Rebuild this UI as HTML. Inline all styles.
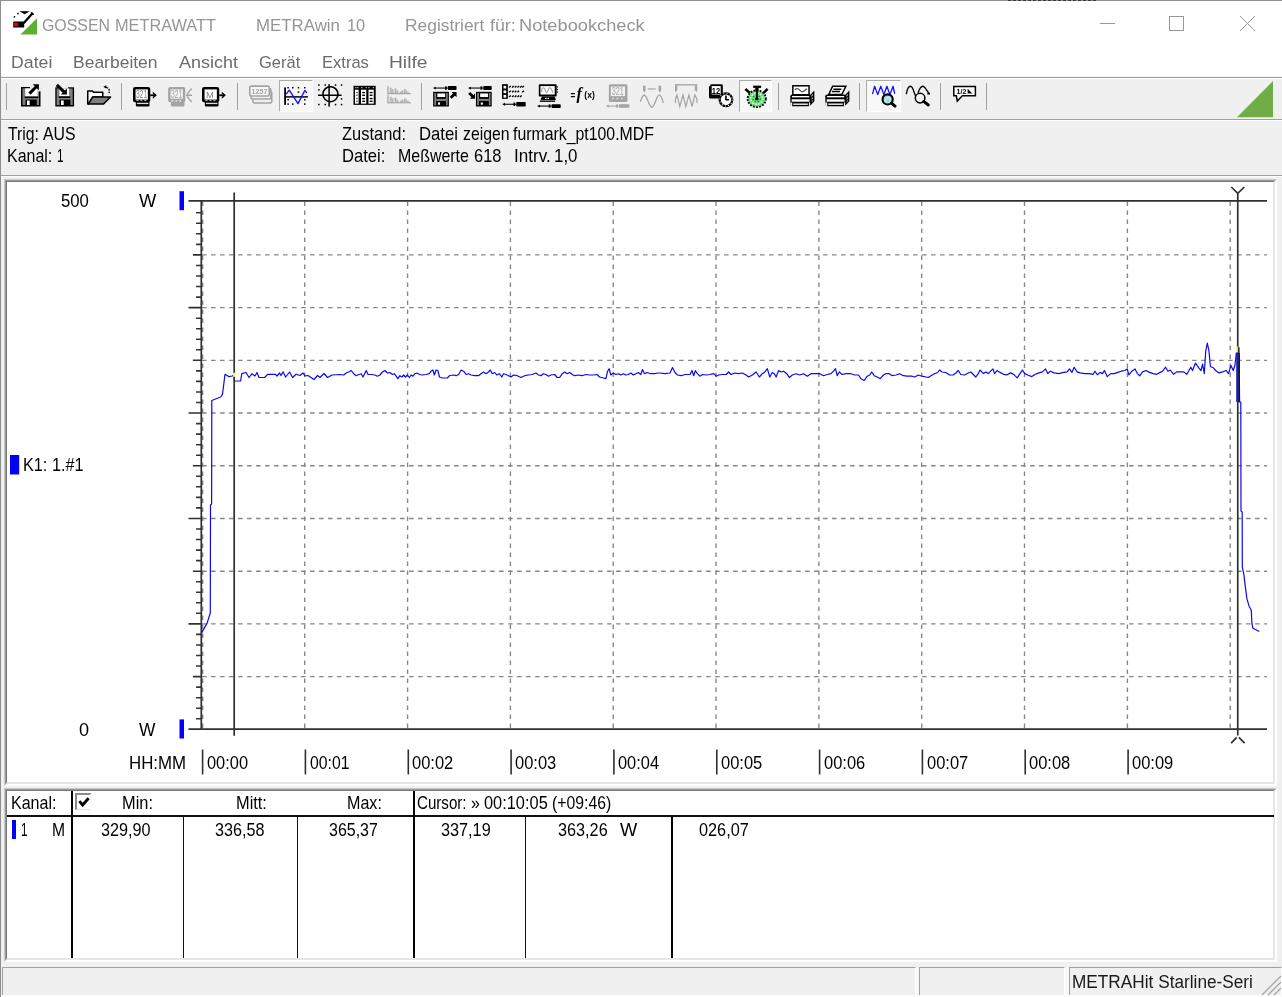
<!DOCTYPE html><html lang="de"><head><meta charset="utf-8"><title>METRAwin 10</title><style>
html,body{margin:0;padding:0;background:#fff;}
body{width:1282px;height:997px;overflow:hidden;position:relative;font-family:"Liberation Sans",sans-serif;}
.a{position:absolute;}
.t{position:absolute;white-space:pre;line-height:30px;height:30px;transform-origin:0 0;}
.sep{position:absolute;top:83px;width:1px;height:27px;background:#a0a0a0;}
.ic{position:absolute;overflow:visible;}
.tb .ic{filter:blur(0.3px);}
.pressed{position:absolute;top:80px;height:32px;background:#f8f8f8;border-top:1px solid #acacac;border-left:1px solid #acacac;border-right:1px solid #fff;border-bottom:1px solid #fff;box-sizing:border-box;}
</style></head><body>
<div class="a" style="left:0;top:0;width:1282px;height:78px;background:#fff"></div>
<div class="a" style="left:0;top:78px;width:1282px;height:919px;background:#f0f0f0"></div>
<div class="a" style="left:0;top:0;width:1282px;height:1px;background:#8e8e8e"></div>
<div class="a" style="left:0;top:0;width:1px;height:997px;background:#8e8e8e"></div>
<div class="a" style="left:1008px;top:0;width:88px;height:0;border-top:1px dashed #3a3a3a"></div>
<div class="a" style="left:1px;top:76px;width:1281px;height:1px;background:#f4f4f4"></div>
<div class="a" style="left:1px;top:77px;width:1281px;height:1px;background:#a0a0a0"></div>
<div class="a" style="left:1px;top:78px;width:1281px;height:1px;background:#fff"></div>
<div class="a" style="left:1px;top:119px;width:1281px;height:1px;background:#a0a0a0"></div>
<div class="a" style="left:1px;top:120px;width:1281px;height:1px;background:#fff"></div>
<div class="a" style="left:1px;top:175px;width:1281px;height:1px;background:#a0a0a0"></div>
<div class="a" style="left:1px;top:176px;width:1281px;height:1px;background:#fff"></div>
<svg class="ic" style="left:12px;top:10px" width="27" height="27" viewBox="12 10 27 27">
<polygon points="20.5,34.6 37,34.6 37,18.2" fill="#5ab031"/>
<path d="M13.2,21.6 h11 v6 h-11z" fill="#000"/>
<rect x="13.7" y="22.7" width="4.4" height="3.6" fill="#e00000"/>
<path d="M23.6,23.2 L32.5,13.2" stroke="#000" stroke-width="2.2" fill="none"/>
<path d="M31.2,12.4 l2.4,2.4" stroke="#000" stroke-width="1.6" fill="none"/>
<path d="M13.8,17.6 l1.2,-1.4 M17.2,14 l1.4,-0.9 M21.8,11.8 h5.6 l-2.8,1.6z" stroke="#000" stroke-width="1.3" fill="#000"/>
</svg>
<svg class="ic" style="left:1090px;top:8px" width="180" height="32" viewBox="1090 8 180 32" fill="none" stroke="#999" stroke-width="1">
<path d="M1100,23.5 h15"/>
<rect x="1169.5" y="16.5" width="14" height="14"/>
<path d="M1240,16 l15,15 M1255,16 l-15,15"/>
</svg>
<div class="sep" style="left:6px"></div>
<div class="sep" style="left:121px"></div>
<div class="sep" style="left:237px"></div>
<div class="sep" style="left:421px"></div>
<div class="sep" style="left:778px"></div>
<div class="sep" style="left:859px"></div>
<div class="sep" style="left:940px"></div>
<div class="sep" style="left:986px"></div>
<div class="pressed" style="left:279px;width:34px"></div>
<div class="pressed" style="left:739px;width:33px"></div>
<div class="pressed" style="left:866px;width:35px"></div>
<svg class="ic" style="left:1236px;top:80px" width="38" height="38" viewBox="1236 80 38 38"><polygon points="1237,117.2 1273,117.2 1273,81" fill="#70ad47"/></svg>
<div class="tb"><svg class="ic" style="left:17.6px;top:84.4px" width="24" height="24" viewBox="0 0 16 16"><rect x="2" y="2" width="13" height="13" fill="#000"/><rect x="3" y="2.9" width="11" height="11.1" fill="#808080"/><rect x="4.8" y="2.9" width="8.3" height="5.5" fill="#fff"/><rect x="4.4" y="8.3" width="9.2" height="1.1" fill="#000"/><rect x="5" y="10.4" width="7.5" height="3.6" fill="#000"/><rect x="6" y="11" width="1.8" height="3" fill="#fff"/><rect x="8" y="1.5" width="7.2" height="1.6" fill="#f0f0f0"/><rect x="13.1" y="1.5" width="2.2" height="3.4" fill="#f0f0f0"/><path d="M7.6,6.4 L12.2,1.8" stroke="#000" stroke-width="2" fill="none"/><polygon points="9.8,0.1 13.9,0.1 13.9,4.2" fill="#000"/></svg>
<svg class="ic" style="left:52.1px;top:84.4px" width="24" height="24" viewBox="0 0 16 16"><rect x="2.2" y="2.2" width="12.5" height="12.8" fill="#000"/><rect x="3.1" y="3" width="10.7" height="11" fill="#808080"/><rect x="5" y="3" width="6.4" height="5.2" fill="#fff"/><rect x="4.4" y="8.2" width="7.8" height="1.1" fill="#000"/><rect x="5" y="10.4" width="7.3" height="3.6" fill="#000"/><rect x="6" y="11" width="1.8" height="3" fill="#fff"/><rect x="4.2" y="1.6" width="6.4" height="1.5" fill="#f0f0f0"/><path d="M3.2,0.6 L8.2,5.4" stroke="#000" stroke-width="2" fill="none"/><polygon points="9.9,7 5.9,7 9.9,3" fill="#000"/></svg>
<svg class="ic" style="left:86.6px;top:84.4px" width="24" height="24" viewBox="0 0 16 16"><polygon points="0.5,4.6 3.6,4.6 4.4,5.5 10.5,5.5 10.5,8.6 3.8,8.6 0.9,13.4 0.5,13.4" fill="#fff" stroke="#000" stroke-width="1" stroke-linejoin="round"/><polygon points="3.9,8.6 15.7,8.6 11,13.4 0.9,13.4" fill="#808080" stroke="#000" stroke-width="1" stroke-linejoin="round"/><path d="M12.6,2.2 Q15.6,2.8 14.7,6" stroke="#000" stroke-width="0.9" fill="none" stroke-dasharray="1.4 0.7"/><polygon points="10.9,1.9 13,0.9 12.7,3" fill="#000"/></svg>
<svg class="ic" style="left:133.1px;top:84.4px" width="24" height="24" viewBox="0 0 16 16"><rect x="0" y="2" width="11.5" height="10.2" rx="1.4" fill="#000"/><rect x="1.7" y="3.6" width="8.2" height="6.8" fill="#fff"/><text x="2.0" y="9.2" font-size="7.4" fill="#808080" font-family="Liberation Sans, sans-serif" textLength="7.4" lengthAdjust="spacingAndGlyphs">321</text><rect x="2.3" y="10.8" width="1.4" height="0.6" fill="#ddd"/><rect x="4.9" y="10.8" width="1.4" height="0.6" fill="#ddd"/><rect x="7.5" y="10.8" width="1.4" height="0.6" fill="#ddd"/><rect x="1.9" y="11.6" width="9.1" height="3.4" rx="0.8" fill="#000"/><rect x="2.6" y="12.5" width="7.7" height="0.9" fill="#dcdcdc"/><path d="M11.5,7.5 H15" stroke="#000" stroke-width="1.2" fill="none"/><polygon points="13.2,5.1 15.9,7.5 13.2,9.9 13.2,8.6 14.3,7.5 13.2,6.4" fill="#000"/></svg>
<svg class="ic" style="left:167.6px;top:84.4px" width="24" height="24" viewBox="0 0 16 16"><rect x="0.1" y="2" width="11.4" height="10.2" rx="1.4" fill="#a4a4a4"/><rect x="1.9" y="11.6" width="9.1" height="3.4" rx="0.8" fill="#a4a4a4"/><rect x="1.7" y="3.6" width="8.2" height="6.2" fill="#f2f2f2"/><text x="2.0" y="9.2" font-size="7.4" fill="#a4a4a4" font-family="Liberation Sans, sans-serif" textLength="7.4" lengthAdjust="spacingAndGlyphs">321</text><rect x="2.3" y="10.8" width="1.2" height="0.9" fill="#f2f2f2"/><rect x="4.9" y="10.8" width="1.2" height="0.9" fill="#f2f2f2"/><rect x="7.5" y="10.8" width="1.2" height="0.9" fill="#f2f2f2"/><path d="M15.8,3 L12.8,6.6 M12,7.5 H16 M12.8,8.4 L15.8,12" stroke="#a4a4a4" stroke-width="0.9" fill="none"/><polygon points="12,7.5 13.6,6.4 13.6,8.6" fill="#a4a4a4"/></svg>
<svg class="ic" style="left:202.1px;top:84.4px" width="24" height="24" viewBox="0 0 16 16"><rect x="0" y="2" width="11.5" height="10.2" rx="1.4" fill="#000"/><rect x="1.7" y="3.6" width="8.2" height="6.8" fill="#fff"/><text x="2.7" y="9.2" font-size="6.4" fill="#808080" font-family="Liberation Sans, sans-serif" textLength="5.2" lengthAdjust="spacingAndGlyphs">M</text><rect x="2.3" y="10.8" width="1.4" height="0.6" fill="#ddd"/><rect x="4.9" y="10.8" width="1.4" height="0.6" fill="#ddd"/><rect x="7.5" y="10.8" width="1.4" height="0.6" fill="#ddd"/><rect x="1.9" y="11.6" width="9.1" height="3.4" rx="0.8" fill="#000"/><rect x="2.6" y="12.5" width="7.7" height="0.9" fill="#dcdcdc"/><path d="M11.5,7.5 H15" stroke="#000" stroke-width="1.2" fill="none"/><polygon points="13.2,5.1 15.9,7.5 13.2,9.9 13.2,8.6 14.3,7.5 13.2,6.4" fill="#000"/></svg>
<svg class="ic" style="left:248.6px;top:84.4px" width="24" height="24" viewBox="0 0 16 16"><rect x="2.6" y="5" width="12.6" height="7.6" rx="1" fill="#f0f0f0" stroke="#a4a4a4" stroke-width="1"/><rect x="1.4" y="3" width="13.2" height="7" rx="1" fill="#f0f0f0" stroke="#a4a4a4" stroke-width="1"/><rect x="0.5" y="1.4" width="13" height="6.6" rx="1" fill="#f6f6f6" stroke="#a4a4a4" stroke-width="1.1"/><text x="1.7" y="6.7" font-size="5" fill="#a4a4a4" font-family="Liberation Sans, sans-serif" font-weight="bold" textLength="10.6" lengthAdjust="spacingAndGlyphs">1257</text></svg>
<svg class="ic" style="left:283.1px;top:84.4px" width="24" height="24" viewBox="0 0 16 16"><rect x="0.8" y="2.3" width="1.2" height="11.6" fill="#000"/><rect x="0.8" y="8.1" width="15.8" height="1.0" fill="#000"/><rect x="2.9" y="2.0" width="1" height="1" fill="#000"/><rect x="6.0" y="2.0" width="1" height="1" fill="#000"/><rect x="9.8" y="2.0" width="1" height="1" fill="#000"/><rect x="14.0" y="2.0" width="1" height="1" fill="#000"/><rect x="9.8" y="4.9" width="1" height="1" fill="#000"/><rect x="2.9" y="10.0" width="1" height="1" fill="#000"/><rect x="14.0" y="10.0" width="1" height="1" fill="#000"/><rect x="2.9" y="12.9" width="1" height="1" fill="#000"/><rect x="6.0" y="12.9" width="1" height="1" fill="#000"/><rect x="14.0" y="12.9" width="1" height="1" fill="#000"/><path d="M2.1,6.7 L4.2,4.1 L10,13.1 L14.5,4.3 L15.9,5.9" stroke="#1010ff" stroke-width="0.9" fill="none" stroke-linejoin="round"/></svg>
<svg class="ic" style="left:317.6px;top:84.4px" width="24" height="24" viewBox="0 0 16 16"><rect x="0.09999999999999998" y="0.2" width="1" height="1" fill="#000"/><rect x="4.3" y="0.2" width="1" height="1" fill="#000"/><rect x="11.200000000000001" y="0.2" width="1" height="1" fill="#000"/><rect x="15.200000000000001" y="0.2" width="1" height="1" fill="#000"/><rect x="0.09999999999999998" y="3.4" width="1" height="1" fill="#000"/><rect x="15.200000000000001" y="9.5" width="1" height="1" fill="#000"/><rect x="0.09999999999999998" y="13.200000000000001" width="1" height="1" fill="#000"/><rect x="4.3" y="13.200000000000001" width="1" height="1" fill="#000"/><rect x="11.200000000000001" y="13.200000000000001" width="1" height="1" fill="#000"/><rect x="15.200000000000001" y="13.200000000000001" width="1" height="1" fill="#000"/><rect x="6.9" y="0.1" width="1" height="15" fill="#000"/><rect x="0" y="7" width="15.7" height="1" fill="#000"/><circle cx="8.3" cy="6.8" r="5" fill="none" stroke="#000" stroke-width="1.1"/></svg>
<svg class="ic" style="left:352.1px;top:84.4px" width="24" height="24" viewBox="0 0 16 16"><rect x="1" y="1.2" width="14.8" height="12.7" fill="#000"/><rect x="2.25" y="2.1" width="0.7" height="0.7" fill="#fff"/><rect x="3.55" y="2.1" width="0.7" height="0.7" fill="#fff"/><rect x="6.25" y="2.1" width="0.7" height="0.7" fill="#fff"/><rect x="9.15" y="2.1" width="0.7" height="0.7" fill="#fff"/><rect x="10.950000000000001" y="2.1" width="0.7" height="0.7" fill="#fff"/><rect x="13.85" y="2.1" width="0.7" height="0.7" fill="#fff"/><rect x="2" y="3.8" width="2.4" height="9.3" fill="#fff"/><rect x="6" y="3.8" width="3.5" height="9.3" fill="#fff"/><rect x="11" y="3.8" width="3.5" height="9.3" fill="#fff"/><rect x="2.9" y="5.3" width="0.8" height="0.8" fill="#000"/><rect x="6.8" y="5.25" width="1.9" height="0.9" fill="#000"/><rect x="11.8" y="5.25" width="1.9" height="0.9" fill="#000"/><rect x="2.9" y="7.1" width="0.8" height="0.8" fill="#000"/><rect x="6.8" y="7.05" width="1.9" height="0.9" fill="#000"/><rect x="11.8" y="7.05" width="1.9" height="0.9" fill="#000"/><rect x="2.9" y="9.299999999999999" width="0.8" height="0.8" fill="#000"/><rect x="6.8" y="9.25" width="1.9" height="0.9" fill="#000"/><rect x="11.8" y="9.25" width="1.9" height="0.9" fill="#000"/><rect x="2.9" y="11.1" width="0.8" height="0.8" fill="#000"/><rect x="6.8" y="11.05" width="1.9" height="0.9" fill="#000"/><rect x="11.8" y="11.05" width="1.9" height="0.9" fill="#000"/></svg>
<svg class="ic" style="left:386.6px;top:84.4px" width="24" height="24" viewBox="0 0 16 16"><rect x="0.2" y="1.2000000000000002" width="0.8" height="4.8" fill="#a4a4a4"/><rect x="0" y="6" width="15.9" height="0.8" fill="#a4a4a4"/><rect x="1.8" y="2.4" width="1.2" height="3.6" fill="#b4b4b4"/><rect x="3" y="3.4" width="1.3" height="2.6" fill="#b4b4b4"/><rect x="5" y="3" width="1.3" height="3" fill="#b4b4b4"/><rect x="6.3" y="4.3" width="1.2" height="1.7" fill="#b4b4b4"/><rect x="8.6" y="5" width="1.2" height="1" fill="#b4b4b4"/><rect x="9.8" y="4.1" width="1.2" height="1.9" fill="#b4b4b4"/><rect x="11.4" y="3.3" width="1.1" height="2.7" fill="#b4b4b4"/><rect x="12.5" y="4.4" width="1" height="1.6" fill="#b4b4b4"/><rect x="13.5" y="5.2" width="1" height="0.8" fill="#b4b4b4"/><rect x="0.2" y="7.3" width="0.8" height="4.8" fill="#a4a4a4"/><rect x="0" y="12.1" width="15.9" height="0.8" fill="#a4a4a4"/><rect x="1.8" y="8.5" width="1.2" height="3.6" fill="#b4b4b4"/><rect x="3" y="9.5" width="1.3" height="2.6" fill="#b4b4b4"/><rect x="5" y="9.1" width="1.3" height="3" fill="#b4b4b4"/><rect x="6.3" y="10.4" width="1.2" height="1.7" fill="#b4b4b4"/><rect x="8.6" y="11.1" width="1.2" height="1" fill="#b4b4b4"/><rect x="9.8" y="10.2" width="1.2" height="1.9" fill="#b4b4b4"/><rect x="11.4" y="9.399999999999999" width="1.1" height="2.7" fill="#b4b4b4"/><rect x="12.5" y="10.5" width="1" height="1.6" fill="#b4b4b4"/><rect x="13.5" y="11.299999999999999" width="1" height="0.8" fill="#b4b4b4"/></svg>
<svg class="ic" style="left:433.1px;top:84.4px" width="24" height="24" viewBox="0 0 16 16"><rect x="0.8" y="2.35" width="9.1" height="0.7" fill="#000"/><polygon points="0,2.7 1.8,1.7500000000000002 1.8,3.6500000000000004" fill="#000"/><rect x="8.0" y="1.6" width="1.2" height="2.2" fill="#000"/><rect x="9.9" y="1.4000000000000001" width="5.799999999999999" height="2.6" rx="0.5" fill="#000"/><rect x="0.1" y="5.2" width="10.5" height="9.8" fill="#000"/><rect x="0.9" y="6" width="1.2" height="8.2" fill="#808080"/><rect x="8.7" y="6" width="1.1" height="8.2" fill="#808080"/><rect x="2.9" y="6.3" width="5.2" height="2.4" fill="#fff"/><rect x="2.1" y="9.9" width="6.6" height="1.4" fill="#808080"/><rect x="3.3000000000000003" y="12.3" width="1.4" height="1.5" fill="#fff"/><path d="M11.8,9.2 L14.4,6.6" stroke="#000" stroke-width="1.9" fill="none"/><polygon points="12.3,5.4 15.7,5.4 15.7,8.8" fill="#000"/></svg>
<svg class="ic" style="left:467.6px;top:84.4px" width="24" height="24" viewBox="0 0 16 16"><rect x="0.9" y="2.35" width="9.299999999999999" height="0.7" fill="#000"/><polygon points="0.1,2.7 1.9000000000000001,1.7500000000000002 1.9000000000000001,3.6500000000000004" fill="#000"/><rect x="8.299999999999999" y="1.6" width="1.2" height="2.2" fill="#000"/><rect x="10.2" y="1.4000000000000001" width="5.600000000000001" height="2.6" rx="0.5" fill="#000"/><rect x="5.3" y="5.2" width="10.5" height="9.8" fill="#000"/><rect x="6.1" y="6" width="1.2" height="8.2" fill="#808080"/><rect x="13.899999999999999" y="6" width="1.1" height="8.2" fill="#808080"/><rect x="8.1" y="6.3" width="5.2" height="2.4" fill="#fff"/><rect x="7.3" y="9.9" width="6.6" height="1.4" fill="#808080"/><rect x="8.5" y="12.3" width="1.4" height="1.5" fill="#fff"/><path d="M0.8,6 L3.5,8.6" stroke="#000" stroke-width="1.9" fill="none"/><polygon points="4.7,9.8 1.2,9.8 4.7,6.4" fill="#000"/></svg>
<svg class="ic" style="left:502.1px;top:84.4px" width="24" height="24" viewBox="0 0 16 16"><rect x="0" y="0.1" width="3.9" height="9.8" fill="#000"/><rect x="1" y="1.2" width="1.8" height="1.8" fill="#fff"/><rect x="1" y="4.3" width="1.8" height="1.8" fill="#fff"/><rect x="1" y="7.3" width="1.8" height="1.8" fill="#fff"/><path d="M4.7,2.4 L5.8,1.4" stroke="#000" stroke-width="0.9" fill="none"/><path d="M6.7,2.4 L7.8,1.4" stroke="#000" stroke-width="0.9" fill="none"/><path d="M8.5,2.4 L9.6,1.4" stroke="#000" stroke-width="0.9" fill="none"/><path d="M10.3,2.4 L11.4,1.4" stroke="#000" stroke-width="0.9" fill="none"/><path d="M12.0,2.4 L13.1,1.4" stroke="#000" stroke-width="0.9" fill="none"/><path d="M13.5,2.4 L14.6,1.4" stroke="#000" stroke-width="0.9" fill="none"/><path d="M4.7,5.5 L5.8,4.5" stroke="#000" stroke-width="0.9" fill="none"/><path d="M6.7,5.5 L7.8,4.5" stroke="#000" stroke-width="0.9" fill="none"/><path d="M8.5,5.5 L9.6,4.5" stroke="#000" stroke-width="0.9" fill="none"/><path d="M10.3,5.5 L11.4,4.5" stroke="#000" stroke-width="0.9" fill="none"/><path d="M13.5,5.5 L14.6,4.5" stroke="#000" stroke-width="0.9" fill="none"/><path d="M4.7,8.6 L5.8,7.6" stroke="#000" stroke-width="0.9" fill="none"/><path d="M6.7,8.6 L7.8,7.6" stroke="#000" stroke-width="0.9" fill="none"/><path d="M8.5,8.6 L9.6,7.6" stroke="#000" stroke-width="0.9" fill="none"/><path d="M10.3,8.6 L11.4,7.6" stroke="#000" stroke-width="0.9" fill="none"/><path d="M12.0,8.6 L13.1,7.6" stroke="#000" stroke-width="0.9" fill="none"/><rect x="1.0" y="13.15" width="8.5" height="0.7" fill="#000"/><polygon points="0.2,13.5 2.0,12.55 2.0,14.45" fill="#000"/><rect x="7.6" y="12.4" width="1.2" height="2.2" fill="#000"/><rect x="9.5" y="12.05" width="6.300000000000001" height="2.9" rx="0.5" fill="#000"/></svg>
<svg class="ic" style="left:536.6px;top:84.4px" width="24" height="24" viewBox="0 0 16 16"><rect x="1.2" y="0.1" width="11.9" height="8.2" rx="0.6" fill="#000"/><rect x="2.3" y="1.4" width="9.5" height="5.6" fill="#fff"/><path d="M3.2,5.6 V3.4 Q4.1,1.8 5,3.2 L5.9,5.2 Q6.6,6.2 7.2,4.6 L7.9,2.9 Q8.8,1.8 9.6,3.4 L10.7,5.8" stroke="#a4a4a4" stroke-width="0.7" fill="none"/><rect x="13.1" y="1.5" width="0.8" height="0.9" fill="#000"/><rect x="13.1" y="3.2" width="0.8" height="0.9" fill="#000"/><rect x="13.1" y="4.9" width="0.8" height="0.9" fill="#000"/><polygon points="3.2,8.3 11.8,8.3 12.6,10.7 2.4,10.7" fill="#000"/><rect x="5.4" y="9.2" width="1" height="0.9" fill="#fff"/><rect x="7" y="9.2" width="1" height="0.9" fill="#fff"/><rect x="1.9" y="11" width="10.2" height="0.9" fill="#000"/><rect x="0.9" y="14.35" width="8.799999999999999" height="0.7" fill="#000"/><polygon points="0.1,14.7 1.9000000000000001,13.75 1.9000000000000001,15.649999999999999" fill="#000"/><rect x="7.799999999999999" y="13.6" width="1.2" height="2.2" fill="#000"/><rect x="9.7" y="13.45" width="6.100000000000001" height="2.5" rx="0.5" fill="#000"/></svg>
<svg class="ic" style="left:571.1px;top:84.4px" width="24" height="24" viewBox="0 0 16 16"><text x="-0.4" y="10" font-size="7.2" fill="#000" font-family="Liberation Sans, sans-serif" font-weight="bold" textLength="3.2" lengthAdjust="spacingAndGlyphs">=</text><text x="3.7" y="10.2" font-size="10.8" font-family="Liberation Serif, serif" font-style="italic" font-weight="bold" fill="#000">f</text><text x="8.9" y="9.3" font-size="6.6" fill="#000" font-family="Liberation Sans, sans-serif" font-weight="bold" textLength="7" lengthAdjust="spacingAndGlyphs">(x)</text></svg>
<svg class="ic" style="left:605.6px;top:84.4px" width="24" height="24" viewBox="0 0 16 16"><rect x="1.9" y="0.1" width="12.4" height="11.9" rx="1.2" fill="#a4a4a4"/><rect x="3.2" y="1.7" width="9.5" height="6.4" fill="#f2f2f2"/><text x="3.9" y="7.5" font-size="7.4" fill="#a4a4a4" font-family="Liberation Sans, sans-serif" textLength="8" lengthAdjust="spacingAndGlyphs">321</text><rect x="4.1" y="9.2" width="1" height="0.9" fill="#f2f2f2"/><rect x="7.1" y="9.2" width="1" height="0.9" fill="#f2f2f2"/><rect x="10.1" y="9.2" width="1" height="0.9" fill="#f2f2f2"/><rect x="0.8" y="14.35" width="7.7" height="0.7" fill="#a4a4a4"/><polygon points="0,14.7 1.8,13.75 1.8,15.649999999999999" fill="#a4a4a4"/><rect x="6.6" y="13.6" width="1.2" height="2.2" fill="#a4a4a4"/><rect x="8.5" y="13.549999999999999" width="7.1" height="2.3" rx="0.5" fill="#a4a4a4"/></svg>
<svg class="ic" style="left:640.1px;top:84.4px" width="24" height="24" viewBox="0 0 16 16"><polygon points="2,1.2 3.7,1.2 3.7,4.2 2.85,5.8 2,4.2" fill="#a4a4a4"/><polygon points="12.4,1.2 14.1,1.2 14.1,4.2 13.25,5.8 12.4,4.2" fill="#a4a4a4"/><rect x="5.2" y="2.9" width="5.3" height="0.8" fill="#a4a4a4"/><path d="M0.2,11.8 C1.2,9 1.8,7.3 2.8,7.3 C4.5,7.3 6,15.5 7.9,15.5 C9.8,15.5 11.2,7.3 12.9,7.3 C13.9,7.3 14.8,10 15.6,12.6" stroke="#a4a4a4" stroke-width="0.9" fill="none"/></svg>
<svg class="ic" style="left:674.6px;top:84.4px" width="24" height="24" viewBox="0 0 16 16"><rect x="0" y="0.1" width="14.8" height="0.9" fill="#a4a4a4"/><polygon points="0,0.9 1.6,0.9 1.6,4.2 0,5.5" fill="#a4a4a4"/><polygon points="14.8,0.9 13.2,0.9 13.2,4.2 14.8,5.5" fill="#a4a4a4"/><path d="M0.3,12.6 V10 L1.3,7.3 L3.2,15 L5.3,7.3 L7.2,15 L9.3,7.3 L11.4,15 L13.2,7.3 L14.6,10 V12.6" stroke="#a4a4a4" stroke-width="0.8" fill="none"/></svg>
<svg class="ic" style="left:709.1px;top:84.4px" width="24" height="24" viewBox="0 0 16 16"><rect x="0" y="1.4" width="8.2" height="8.2" rx="0.7" fill="#000"/><rect x="0.9" y="0.1" width="8.3" height="8.3" rx="0.8" fill="#000"/><rect x="1.8" y="1.4" width="6" height="5.6" fill="#fff"/><text x="1.9" y="6.5" font-size="5.6" fill="#000" font-family="Liberation Sans, sans-serif" font-weight="bold" textLength="5.6" lengthAdjust="spacingAndGlyphs">12</text><circle cx="11.3" cy="10.5" r="4.2" fill="#fff" stroke="#000" stroke-width="1.5"/><circle cx="11.3" cy="10.5" r="4.2" fill="none" stroke="#fff" stroke-width="0.9" stroke-dasharray="0.5 1.7"/><path d="M11.3,10.7 V7.6 M11,10.5 H13.4" stroke="#000" stroke-width="1.1" fill="none"/></svg>
<svg class="ic" style="left:743.6px;top:84.4px" width="24" height="24" viewBox="0 0 16 16"><ellipse cx="8.5" cy="9.8" rx="6.1" ry="5.6" fill="#6ddc7a" stroke="#000" stroke-width="1.2" stroke-dasharray="1.2 0.9"/><ellipse cx="8.5" cy="9.8" rx="4" ry="3.7" fill="none" stroke="#fff" stroke-width="1" stroke-dasharray="0.9 1.1"/><ellipse cx="8.5" cy="9.8" rx="2.4" ry="2.2" fill="none" stroke="#0a8a1a" stroke-width="0.9" stroke-dasharray="0.8 1.2"/><rect x="6.1" y="1.1" width="5.3" height="1.5" fill="#000"/><rect x="7.5" y="2.4" width="2.2" height="2.6" fill="#000"/><path d="M0.9,3.3 L3.8,5.9 M15.7,3.3 L13.1,5.9" stroke="#000" stroke-width="1.7" fill="none"/><rect x="7.9" y="4.7" width="1.4" height="5.6" fill="#000"/><rect x="7.5" y="9.3" width="2.2" height="1.5" fill="#000"/></svg>
<svg class="ic" style="left:790.1px;top:84.4px" width="24" height="24" viewBox="0 0 16 16"><rect x="1.9" y="1.2" width="10.8" height="6" fill="#fff" stroke="#000" stroke-width="1"/><path d="M3.3,3.9 Q4.4,2.6 5.6,3.4 L8,5.3 Q9,5.3 11.2,3.2" stroke="#555" stroke-width="0.8" fill="none"/><rect x="0.2" y="7" width="13.7" height="7.9" rx="1.2" fill="#000"/><rect x="1.3" y="8" width="11.5" height="0.9" fill="#fff"/><rect x="1.1" y="10.2" width="11.9" height="1.6" fill="#fff"/><rect x="2.2" y="13" width="9.7" height="0.9" fill="#fff"/><rect x="0.2" y="12.3" width="1.3" height="2.6" fill="#f0f0f0"/><rect x="12.6" y="12.3" width="1.3" height="2.6" fill="#f0f0f0"/><polygon points="13.9,7.4 15.8,5.4 15.8,11.4 13.9,13.4" fill="#b8b8b8" stroke="#000" stroke-width="0.9"/><path d="M13.9,9.6 L15.8,7.6 M13.9,11.6 L15.8,9.6" stroke="#000" stroke-width="0.7" fill="none"/></svg>
<svg class="ic" style="left:824.6px;top:84.4px" width="24" height="24" viewBox="0 0 16 16"><polygon points="5.1,1.5 13.9,1.5 11.2,7 2.5,7" fill="#fff" stroke="#000" stroke-width="1"/><path d="M5.6,3.5 H10.9 M4.7,5 H10" stroke="#000" stroke-width="0.9" fill="none"/><rect x="0.2" y="7" width="13.7" height="7.9" rx="1.2" fill="#000"/><rect x="1.3" y="8" width="11.5" height="0.9" fill="#fff"/><rect x="1.1" y="10.2" width="11.9" height="1.6" fill="#fff"/><rect x="2.2" y="13" width="9.7" height="0.9" fill="#fff"/><rect x="0.2" y="12.3" width="1.3" height="2.6" fill="#f0f0f0"/><rect x="12.6" y="12.3" width="1.3" height="2.6" fill="#f0f0f0"/><polygon points="13.9,7.4 15.8,5.4 15.8,11.4 13.9,13.4" fill="#b8b8b8" stroke="#000" stroke-width="0.9"/><path d="M13.9,9.6 L15.8,7.6 M13.9,11.6 L15.8,9.6" stroke="#000" stroke-width="0.7" fill="none"/></svg>
<svg class="ic" style="left:871.1px;top:84.4px" width="24" height="24" viewBox="0 0 16 16"><defs><radialGradient id="mg" cx="0.55" cy="0.6" r="0.6"><stop offset="0" stop-color="#40f0e0"/><stop offset="0.45" stop-color="#c8e8e8"/><stop offset="1" stop-color="#b0b0b0"/></radialGradient></defs><path d="M1,6.7 L2.4,1.5 L4.5,7.1 L6.5,1.5 L8.6,7.1 L10.6,1.5 L12.6,7.1 L14.7,1.5 L15.8,6.5" stroke="#1010ff" stroke-width="0.85" fill="none" stroke-linejoin="round"/><circle cx="11.1" cy="10.3" r="3.4" fill="url(#mg)" stroke="#000" stroke-width="1.4"/><path d="M13.7,12.8 L16,14.7" stroke="#000" stroke-width="2.0" fill="none" stroke-linecap="round"/></svg>
<svg class="ic" style="left:905.6px;top:84.4px" width="24" height="24" viewBox="0 0 16 16"><path d="M0.2,6.8 C0.8,3 1.8,1.5 3,1.5 C4.8,1.5 5.2,6 6.4,8 M8,5.8 C9.2,2.5 10,1.5 11.2,1.5 C12.6,1.5 13.8,4.5 15.5,6.5 M14.2,6.5 H16" stroke="#000" stroke-width="0.9" fill="none"/><circle cx="9.4" cy="9.4" r="3.2" fill="#f4f4f4" fill-opacity="0.8" stroke="#000" stroke-width="1"/><path d="M11.8,11.6 L14.9,14" stroke="#000" stroke-width="1.9" fill="none" stroke-linecap="round"/></svg>
<svg class="ic" style="left:952.1px;top:84.4px" width="24" height="24" viewBox="0 0 16 16"><polygon points="1.2,1.6 15.6,1.6 15.6,7.9 6.9,7.9 3.5,11.4 2.9,7.9 1.2,7.9" fill="#fff" stroke="#000" stroke-width="1"/><text x="3" y="6.6" font-size="4.8" fill="#000" font-family="Liberation Sans, sans-serif" font-weight="bold" textLength="6.6" lengthAdjust="spacingAndGlyphs">1/2</text><polygon points="10.4,3.2 13.6,6.4 10.4,6.4" fill="#000"/></svg></div>
<div class="a" style="left:4px;top:179px;width:1273px;height:607px;background:#fff;box-sizing:border-box;border-top:1px solid #c8c8c8;border-left:1px solid #c8c8c8;border-right:1px solid #fff;border-bottom:1px solid #fff"></div><div class="a" style="left:5px;top:180px;width:1271px;height:605px;background:#fff;box-sizing:border-box;border-top:1px solid #9a9a9a;border-left:1px solid #9a9a9a;border-right:1px solid #fff;border-bottom:1px solid #fff"></div><div class="a" style="left:6px;top:181px;width:1269px;height:603px;background:#fff;box-sizing:border-box;border-top:1px solid #7a7a7a;border-left:1px solid #7a7a7a;border-right:2px solid #e6e6e6;border-bottom:2px solid #e6e6e6"></div>
<div class="a" style="left:4px;top:788px;width:1273px;height:174px;background:#fff;box-sizing:border-box;border-top:1px solid #c8c8c8;border-left:1px solid #c8c8c8;border-right:1px solid #fff;border-bottom:1px solid #fff"></div><div class="a" style="left:5px;top:789px;width:1271px;height:172px;background:#fff;box-sizing:border-box;border-top:1px solid #9a9a9a;border-left:1px solid #9a9a9a;border-right:1px solid #fff;border-bottom:1px solid #fff"></div><div class="a" style="left:6px;top:790px;width:1269px;height:170px;background:#fff;box-sizing:border-box;border-top:1px solid #7a7a7a;border-left:1px solid #7a7a7a;border-right:2px solid #e6e6e6;border-bottom:2px solid #e6e6e6"></div>
<svg class="ic" style="left:7px;top:182px" width="1267" height="600" viewBox="7 182 1267 600" fill="none"><path d="M202.1,254.9 H1267 M202.1,307.6 H1267 M202.1,360.3 H1267 M202.1,413.0 H1267 M202.1,465.7 H1267 M202.1,518.5 H1267 M202.1,571.2 H1267 M202.1,623.9 H1267 M202.1,676.6 H1267 " stroke="#858585" stroke-width="1.35" stroke-dasharray="4.5 4.5"/><path d="M202.7,201.6 V728.4 M304.7,201.6 V728.4 M407.6,201.6 V728.4 M510.4,201.6 V728.4 M613.2,201.6 V728.4 M716.0,201.6 V728.4 M818.9,201.6 V728.4 M921.7,201.6 V728.4 M1024.5,201.6 V728.4 M1127.4,201.6 V728.4 M1230.2,201.6 V728.4 " stroke="#858585" stroke-width="1.35" stroke-dasharray="4.5 4.5"/><path d="M188.5,200.85 H1267 M188.5,729.05 H1267 M201.3,200.85 V729" stroke="#303030" stroke-width="1.7"/><path d="M196.1,212.7 H201.3 M196.1,223.3 H201.3 M196.1,233.8 H201.3 M196.1,244.4 H201.3 M192.9,254.9 H201.3 M196.1,265.5 H201.3 M196.1,276.0 H201.3 M196.1,286.5 H201.3 M196.1,297.1 H201.3 M188.5,307.6 H201.3 M196.1,318.2 H201.3 M196.1,328.7 H201.3 M196.1,339.2 H201.3 M196.1,349.8 H201.3 M192.9,360.3 H201.3 M196.1,370.9 H201.3 M196.1,381.4 H201.3 M196.1,392.0 H201.3 M196.1,402.5 H201.3 M188.5,413.0 H201.3 M196.1,423.6 H201.3 M196.1,434.1 H201.3 M196.1,444.7 H201.3 M196.1,455.2 H201.3 M192.9,465.8 H201.3 M196.1,476.3 H201.3 M196.1,486.8 H201.3 M196.1,497.4 H201.3 M196.1,507.9 H201.3 M188.5,518.5 H201.3 M196.1,529.0 H201.3 M196.1,539.5 H201.3 M196.1,550.1 H201.3 M196.1,560.6 H201.3 M192.9,571.2 H201.3 M196.1,581.7 H201.3 M196.1,592.3 H201.3 M196.1,602.8 H201.3 M196.1,613.3 H201.3 M188.5,623.9 H201.3 M196.1,634.4 H201.3 M196.1,645.0 H201.3 M196.1,655.5 H201.3 M196.1,666.0 H201.3 M192.9,676.6 H201.3 M196.1,687.1 H201.3 M196.1,697.7 H201.3 M196.1,708.2 H201.3 M196.1,718.8 H201.3 " stroke="#303030" stroke-width="1.6"/><path d="M202.6,749.4 V774.4 M305.4,749.4 V774.4 M408.3,749.4 V774.4 M511.1,749.4 V774.4 M613.9,749.4 V774.4 M716.8,749.4 V774.4 M819.6,749.4 V774.4 M922.4,749.4 V774.4 M1025.2,749.4 V774.4 M1128.1,749.4 V774.4 " stroke="#303030" stroke-width="1.6"/><rect x="179.5" y="191.2" width="4.5" height="19" fill="#0000ff"/><rect x="179.5" y="719.4" width="4.5" height="19.1" fill="#0000ff"/><rect x="10" y="455" width="9.2" height="19.5" fill="#0000ff"/><polyline points="201.7,632.6 207.0,623.4 210.3,613.0 210.5,505.0 211.6,504.0 211.8,400.5 220.6,397.0 222.5,394.3 225.0,374.3 228.7,376.6 232.5,376.0 234.0,374.0 234.4,381.0 240.6,381.0 241.8,373.7 246.0,372.5 249.0,377.5 252.0,373.7 255.0,376.0 257.0,372.5 259.0,377.5 264.6,377.5 267.7,374.3 275.5,374.3 277.0,376.0 279.6,373.0 281.0,375.5 283.0,371.8 285.6,377.0 289.6,372.0 292.6,377.5 296.0,374.3 300.0,375.5 303.0,373.0 305.0,376.0 308.0,375.5 314.0,379.5 317.6,375.5 320.0,377.5 324.0,373.5 327.5,377.5 332.0,375.0 340.0,374.5 340.0,374.5 343.7,375.0 346.2,373.0 348.7,372.0 351.2,370.5 353.7,373.7 356.2,375.7 358.7,374.5 361.2,373.7 363.0,377.0 365.0,373.0 366.2,370.5 368.0,374.5 371.2,374.5 374.9,375.0 377.4,376.2 379.9,375.0 382.4,372.0 384.9,370.5 387.4,373.0 389.9,372.5 392.4,374.5 394.4,373.7 396.2,376.2 397.9,378.7 399.9,375.7 401.9,377.0 403.7,375.0 405.4,377.0 407.4,375.0 409.4,377.5 411.1,375.0 412.9,376.2 414.9,373.7 416.9,373.0 419.4,374.5 422.4,375.0 426.1,374.5 429.4,373.7 431.1,371.2 432.9,370.0 434.4,375.0 436.1,370.0 437.9,370.5 439.4,377.0 442.3,378.0 447.3,378.0 449.8,375.5 453.6,375.0 456.1,375.7 458.6,374.5 461.1,370.0 463.6,371.2 466.1,374.5 468.6,373.7 471.1,375.0 474.8,375.7 478.5,375.7 481.0,373.7 483.5,372.0 486.0,373.7 488.5,372.0 490.3,370.0 492.3,373.7 494.8,372.5 496.8,375.0 499.3,373.7 501.8,377.0 503.5,373.7 506.0,374.5 508.5,375.7 511.0,377.0 513.5,375.0 517.2,375.7 521.0,377.5 524.7,375.7 528.5,375.0 532.2,374.5 536.0,373.0 538.5,375.0 540.9,375.7 543.4,373.7 545.9,374.5 548.4,376.2 550.9,375.0 554.7,374.5 557.2,377.5 559.7,377.5 562.2,373.7 564.7,372.0 567.2,373.7 569.7,372.5 572.2,374.5 574.6,375.7 578.4,375.0 582.1,375.7 585.9,374.5 589.6,375.0 593.4,375.0 597.1,374.5 599.6,377.0 603.4,378.0 605.9,378.7 607.6,371.2 609.1,368.7 610.8,375.0 613.3,373.0 615.8,374.5 618.3,373.7 620.8,375.0 623.3,373.7 625.8,375.0 628.3,374.5 630.8,373.0 633.3,375.0 635.8,373.7 638.3,372.5 640.8,374.5 642.5,369.5 644.5,373.7 647.0,372.5 650.8,373.7 654.5,373.7 658.3,373.0 660.0,373.0 665.0,373.7 670.0,373.0 672.5,367.5 675.0,372.5 677.5,375.0 681.2,375.7 685.0,374.5 690.0,374.5 692.0,370.5 693.7,375.7 695.4,370.5 697.4,373.7 699.9,376.2 702.4,374.5 706.2,375.0 709.9,374.5 713.7,373.7 716.2,376.2 718.7,375.0 722.4,374.5 726.2,374.5 728.6,372.0 731.1,374.5 734.9,373.0 738.6,373.7 742.4,373.0 746.1,375.0 748.6,377.0 752.4,375.0 756.1,372.0 759.4,377.0 762.3,373.7 764.8,372.0 767.3,368.7 769.8,377.0 772.3,372.5 774.3,373.7 776.1,377.0 778.6,370.5 781.1,372.0 783.6,371.2 786.8,373.7 789.3,377.5 792.3,375.0 796.0,373.7 799.8,375.0 803.5,373.7 807.3,376.2 811.0,373.7 814.8,373.7 819.8,373.7 823.5,375.7 827.2,374.5 831.0,373.7 833.5,371.2 835.5,368.7 837.2,375.7 839.2,372.0 842.2,374.5 846.0,373.7 851.0,373.7 854.7,375.0 858.5,375.0 860.9,378.7 864.2,380.5 867.2,376.2 869.7,375.0 871.7,372.0 874.2,375.7 877.2,377.0 880.2,378.7 883.4,375.0 885.9,373.7 889.2,373.7 892.2,375.7 895.9,375.0 899.6,373.7 903.4,375.7 907.1,376.2 912.1,376.2 914.6,377.0 918.4,375.0 922.1,376.2 925.9,377.0 928.3,377.5 932.1,375.0 934.6,373.7 937.6,372.5 939.6,370.0 942.1,372.0 945.8,372.5 949.6,375.0 953.3,375.0 955.8,373.0 958.3,370.5 960.8,374.5 964.5,375.0 968.3,373.0 970.8,372.0 973.3,374.5 975.8,377.0 978.3,373.7 980.0,370.0 983.5,373.6 985.9,371.9 988.2,373.6 990.6,371.2 993.0,368.9 994.6,373.6 997.0,370.5 1000.0,372.4 1003.6,374.3 1007.1,374.8 1010.6,372.9 1014.2,374.8 1017.2,377.8 1020.0,373.6 1022.4,370.0 1024.8,373.6 1028.3,375.2 1031.8,376.6 1035.4,374.3 1038.9,372.9 1042.4,371.9 1045.5,368.9 1047.8,373.6 1050.2,371.2 1054.2,372.9 1058.9,373.6 1063.6,372.4 1067.2,371.9 1069.5,368.9 1071.9,372.4 1074.2,367.2 1077.1,371.9 1080.1,372.9 1084.8,373.6 1089.5,373.6 1093.1,374.3 1095.0,371.2 1097.3,374.8 1100.1,372.4 1102.5,373.6 1104.4,370.5 1107.2,376.6 1110.7,373.6 1114.3,373.6 1117.8,372.4 1121.3,371.2 1124.9,370.5 1127.2,368.9 1128.9,374.8 1131.9,371.2 1135.0,368.9 1137.4,373.6 1139.7,375.9 1142.5,371.9 1146.1,370.5 1149.6,372.4 1153.1,373.6 1156.7,374.3 1160.2,372.4 1162.6,371.2 1165.6,367.2 1168.0,371.2 1170.3,370.0 1173.6,374.3 1176.7,371.9 1180.2,371.9 1183.8,371.9 1186.8,374.3 1189.2,370.0 1190.8,367.2 1192.5,370.5 1195.5,363.0 1198.6,367.7 1201.0,370.5 1202.6,364.2 1204.3,373.6 1205.7,351.2 1207.3,343.0 1209.0,351.2 1210.4,366.5 1213.2,367.7 1215.6,370.5 1219.1,372.9 1222.6,371.9 1226.2,370.5 1228.5,373.6 1230.9,365.3 1233.2,370.5 1234.9,365.3 1236.3,353.6 1237.2,347.7 1237.6,347.5 1238.2,402.0 1239.0,347.5 1239.6,402.0 1240.8,402.0 1241.0,511.0 1242.2,512.0 1242.3,567.0 1243.9,574.6 1245.3,586.6 1246.9,598.7 1249.1,606.2 1251.3,610.2 1251.9,623.2 1252.9,628.3 1259.3,631.5" stroke="#0a0af0" stroke-width="1.2" stroke-linejoin="round"/><rect x="1236.3" y="353" width="3.6" height="49" fill="#0000c0"/><path d="M234.2,192.4 V735.8 M1237.75,193.3 V735.6 M1231.3,187 L1237.75,193.3 L1244.4,187 M1231.1,743.1 L1236.8,737.3 M1238.9,737.3 L1244.6,743.1" stroke="#303030" stroke-width="1.7"/><rect x="1236" y="346.5" width="1.8" height="6" fill="#ffff66"/><rect x="233.1" y="372.8" width="2.2" height="4" fill="#ffff66"/></svg>
<div class="a" style="left:7px;top:815px;width:1267px;height:2px;background:#111"></div>
<div class="a" style="left:70.5px;top:791px;width:2.5px;height:167px;background:#000"></div>
<div class="a" style="left:412.5px;top:791px;width:2.5px;height:167px;background:#000"></div>
<div class="a" style="left:670.5px;top:817px;width:2.5px;height:141px;background:#000"></div>
<div class="a" style="left:182.8px;top:817px;width:1.4px;height:141px;background:#111"></div>
<div class="a" style="left:296.8px;top:817px;width:1.4px;height:141px;background:#111"></div>
<div class="a" style="left:524.8px;top:817px;width:1.4px;height:141px;background:#111"></div>
<div class="a" style="left:11.5px;top:820px;width:4.5px;height:19px;background:#0000ff"></div>
<div class="a" style="left:75px;top:793px;width:16px;height:17px;box-sizing:border-box;background:#fff;border-top:2.5px solid #8a8a8a;border-left:2.2px solid #8a8a8a;border-right:1px solid #fafafa;border-bottom:1px solid #e0e0e0"></div>
<svg class="ic" style="left:75px;top:793px" width="16" height="17" viewBox="0 0 16 17"><path d="M4.4,8.2 L7.6,12 L13.6,5.2" stroke="#000" stroke-width="2.8" fill="none"/></svg>
<div class="a" style="left:1px;top:962px;width:1281px;height:35px;background:#f0f0f0"></div>
<div class="a" style="left:2px;top:967px;width:914px;height:29px;box-sizing:border-box;border-top:1px solid #a0a0a0;border-left:1px solid #a0a0a0;border-right:1px solid #fff;border-bottom:1px solid #fff"></div>
<div class="a" style="left:919px;top:967px;width:146px;height:29px;box-sizing:border-box;border-top:1px solid #a0a0a0;border-left:1px solid #a0a0a0;border-right:1px solid #fff;border-bottom:1px solid #fff"></div>
<div class="a" style="left:1069px;top:967px;width:213px;height:29px;box-sizing:border-box;border-top:1px solid #a0a0a0;border-left:1px solid #a0a0a0;border-right:1px solid #fff;border-bottom:1px solid #fff"></div>
<div class="a" style="left:916px;top:967px;width:3px;height:30px;background:#f8f8f8"></div><div class="a" style="left:1065px;top:967px;width:4px;height:30px;background:#f8f8f8"></div>
<div class="a" style="left:1px;top:995px;width:1281px;height:2px;background:#fff"></div>
<svg class="ic" style="left:1258px;top:972px" width="24" height="25" viewBox="1258 972 24 25"><path d="M1262,995 L1281,976 M1268,995 L1281,982 M1274,995 L1281,988" stroke="#a8a8a8" stroke-width="1.4"/></svg>
<span class="t" style="left:41.81px;top:9.6px;font-size:17.2px;color:#959595;transform:scaleX(0.9245)">GOSSEN</span>
<span class="t" style="left:115.11px;top:9.6px;font-size:17.2px;color:#959595;transform:scaleX(0.9489)">METRAWATT</span>
<span class="t" style="left:255.87px;top:9.6px;font-size:17.2px;color:#959595;transform:scaleX(0.9808)">METRAwin</span>
<span class="t" style="left:346.81px;top:9.6px;font-size:17.2px;color:#959595;transform:scaleX(0.9507)">10</span>
<span class="t" style="left:404.84px;top:9.6px;font-size:17.2px;color:#959595;transform:scaleX(1.0117)">Registriert</span>
<span class="t" style="left:490.34px;top:9.6px;font-size:17.2px;color:#959595;transform:scaleX(1.0366)">für:</span>
<span class="t" style="left:519.17px;top:9.6px;font-size:17.2px;color:#959595;transform:scaleX(1.0607)">Notebookcheck</span>
<span class="t" style="left:11.21px;top:46.5px;font-size:17.2px;color:#6b6b6b;transform:scaleX(1.0305)">Datei</span>
<span class="t" style="left:72.63px;top:46.5px;font-size:17.2px;color:#6b6b6b;transform:scaleX(1.0173)">Bearbeiten</span>
<span class="t" style="left:178.7px;top:46.5px;font-size:17.2px;color:#6b6b6b;transform:scaleX(1.0471)">Ansicht</span>
<span class="t" style="left:259.08px;top:46.5px;font-size:17.2px;color:#6b6b6b;transform:scaleX(0.9609)">Gerät</span>
<span class="t" style="left:321.6px;top:46.5px;font-size:17.2px;color:#6b6b6b;transform:scaleX(0.9617)">Extras</span>
<span class="t" style="left:389.1px;top:46.5px;font-size:17.2px;color:#6b6b6b;transform:scaleX(1.1169)">Hilfe</span>
<span class="t" style="left:1071.58px;top:967.0px;font-size:17.6px;color:#1a1a1a;transform:scaleX(0.9792)">METRAHit Starline-Seri</span>
<div class="a" style="left:0;top:0;width:1282px;height:997px;will-change:transform;filter:blur(0.35px)">
<span class="t" style="left:7.89px;top:118.7px;font-size:18.5px;color:#000000;transform:scaleX(0.8522)">Trig:</span>
<span class="t" style="left:43.0px;top:118.7px;font-size:18.5px;color:#000000;transform:scaleX(0.8564)">AUS</span>
<span class="t" style="left:6.81px;top:140.9px;font-size:18.5px;color:#000000;transform:scaleX(0.8629)">Kanal:</span>
<span class="t" style="left:57.4px;top:140.9px;font-size:18.5px;color:#000000;transform:scaleX(0.6424)">1</span>
<span class="t" style="left:342.26px;top:118.7px;font-size:18.5px;color:#000000;transform:scaleX(0.89)">Zustand:</span>
<span class="t" style="left:418.84px;top:118.7px;font-size:18.5px;color:#000000;transform:scaleX(0.9037)">Datei</span>
<span class="t" style="left:462.56px;top:118.7px;font-size:18.5px;color:#000000;transform:scaleX(0.8531)">zeigen</span>
<span class="t" style="left:512.79px;top:118.7px;font-size:18.5px;color:#000000;transform:scaleX(0.8563)">furmark_pt100.MDF</span>
<span class="t" style="left:342.45px;top:140.9px;font-size:18.5px;color:#000000;transform:scaleX(0.8972)">Datei:</span>
<span class="t" style="left:398.21px;top:140.9px;font-size:18.5px;color:#000000;transform:scaleX(0.8625)">Meßwerte</span>
<span class="t" style="left:474.33px;top:140.9px;font-size:18.5px;color:#000000;transform:scaleX(0.8889)">618</span>
<span class="t" style="left:513.52px;top:140.9px;font-size:18.5px;color:#000000;transform:scaleX(0.9224)">Intrv.</span>
<span class="t" style="left:554.36px;top:140.9px;font-size:18.5px;color:#000000;transform:scaleX(0.9137)">1,0</span>
<span class="t" style="left:61.02px;top:186.3px;font-size:18.5px;color:#000000;transform:scaleX(0.9051)">500</span>
<span class="t" style="left:138.75px;top:186.3px;font-size:18.5px;color:#000000;transform:scaleX(0.9882)">W</span>
<span class="t" style="left:78.87px;top:714.5px;font-size:18.5px;color:#000000;transform:scaleX(0.9778)">0</span>
<span class="t" style="left:139.16px;top:714.5px;font-size:18.5px;color:#000000;transform:scaleX(0.9412)">W</span>
<span class="t" style="left:23.18px;top:450.4px;font-size:18.5px;color:#000000;transform:scaleX(0.8782)">K1: 1.#1</span>
<span class="t" style="left:129.13px;top:748.4px;font-size:18.5px;color:#000000;transform:scaleX(0.9105)">HH:MM</span>
<span class="t" style="left:206.73px;top:748.4px;font-size:18.5px;color:#000000;transform:scaleX(0.8867)">00:00</span>
<span class="t" style="left:309.59px;top:748.4px;font-size:18.5px;color:#000000;transform:scaleX(0.8514)">00:01</span>
<span class="t" style="left:412.39px;top:748.4px;font-size:18.5px;color:#000000;transform:scaleX(0.8916)">00:02</span>
<span class="t" style="left:515.22px;top:748.4px;font-size:18.5px;color:#000000;transform:scaleX(0.8916)">00:03</span>
<span class="t" style="left:618.05px;top:748.4px;font-size:18.5px;color:#000000;transform:scaleX(0.8867)">00:04</span>
<span class="t" style="left:720.88px;top:748.4px;font-size:18.5px;color:#000000;transform:scaleX(0.8916)">00:05</span>
<span class="t" style="left:823.71px;top:748.4px;font-size:18.5px;color:#000000;transform:scaleX(0.8916)">00:06</span>
<span class="t" style="left:926.54px;top:748.4px;font-size:18.5px;color:#000000;transform:scaleX(0.8916)">00:07</span>
<span class="t" style="left:1029.37px;top:748.4px;font-size:18.5px;color:#000000;transform:scaleX(0.8916)">00:08</span>
<span class="t" style="left:1132.2px;top:748.4px;font-size:18.5px;color:#000000;transform:scaleX(0.8916)">00:09</span>
<span class="t" style="left:11.2px;top:788.2px;font-size:18.5px;color:#000000;transform:scaleX(0.867)">Kanal:</span>
<span class="t" style="left:122.37px;top:788.2px;font-size:18.5px;color:#000000;transform:scaleX(0.885)">Min:</span>
<span class="t" style="left:236.07px;top:788.2px;font-size:18.5px;color:#000000;transform:scaleX(0.885)">Mitt:</span>
<span class="t" style="left:347.39px;top:788.2px;font-size:18.5px;color:#000000;transform:scaleX(0.8703)">Max:</span>
<span class="t" style="left:417.09px;top:788.2px;font-size:18.5px;color:#000000;transform:scaleX(0.8172)">Cursor:</span>
<span class="t" style="left:471.36px;top:788.2px;font-size:18.5px;color:#000000;transform:scaleX(0.8571)">»</span>
<span class="t" style="left:483.94px;top:788.2px;font-size:18.5px;color:#000000;transform:scaleX(0.8851)">00:10:05</span>
<span class="t" style="left:552.15px;top:788.2px;font-size:18.5px;color:#000000;transform:scaleX(0.8535)">(+09:46)</span>
<span class="t" style="left:21.01px;top:814.8px;font-size:18.5px;color:#000000;transform:scaleX(0.6303)">1</span>
<span class="t" style="left:52.43px;top:814.8px;font-size:18.5px;color:#000000;transform:scaleX(0.848)">M</span>
<span class="t" style="left:100.94px;top:814.8px;font-size:18.5px;color:#000000;transform:scaleX(0.876)">329,90</span>
<span class="t" style="left:214.95px;top:814.8px;font-size:18.5px;color:#000000;transform:scaleX(0.8727)">336,58</span>
<span class="t" style="left:328.65px;top:814.8px;font-size:18.5px;color:#000000;transform:scaleX(0.8636)">365,37</span>
<span class="t" style="left:441.24px;top:814.8px;font-size:18.5px;color:#000000;transform:scaleX(0.8782)">337,19</span>
<span class="t" style="left:558.24px;top:814.8px;font-size:18.5px;color:#000000;transform:scaleX(0.8782)">363,26</span>
<span class="t" style="left:620.15px;top:814.8px;font-size:18.5px;color:#000000;transform:scaleX(0.9882)">W</span>
<span class="t" style="left:698.94px;top:814.8px;font-size:18.5px;color:#000000;transform:scaleX(0.88)">026,07</span>
</div>
</body></html>
